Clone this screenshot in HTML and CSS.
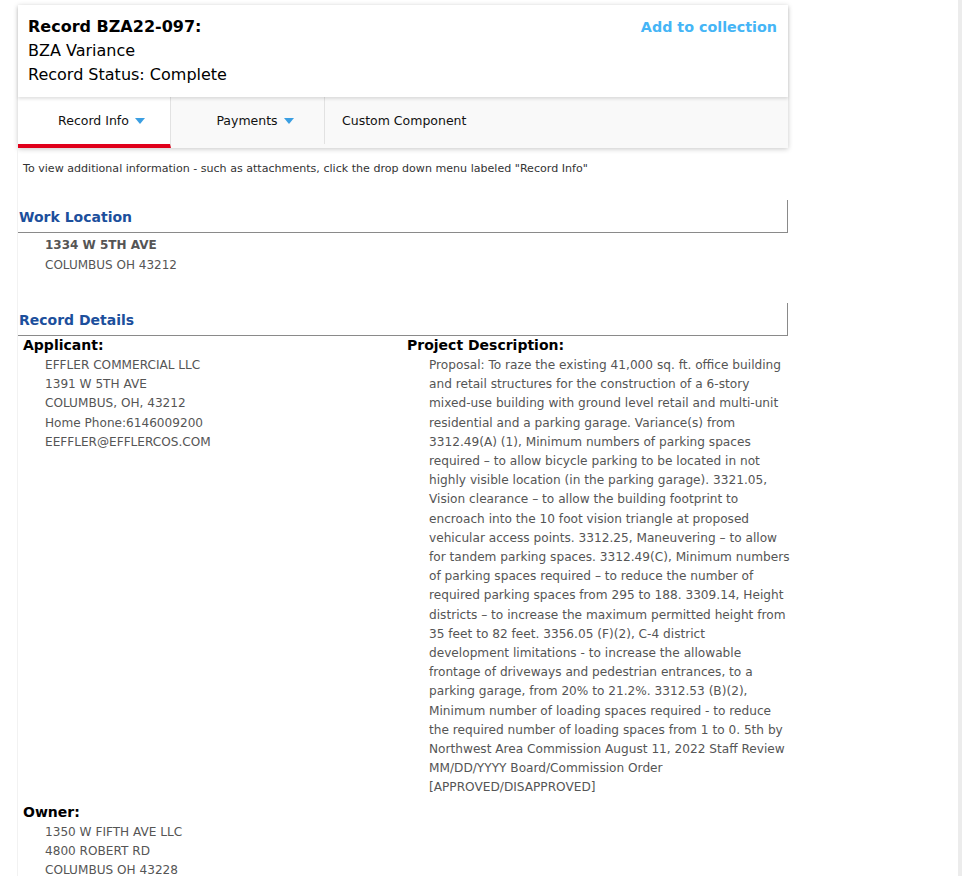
FILE: index.html
```html
<!DOCTYPE html>
<html lang="en">
<head>
<meta charset="utf-8">
<title>Record BZA22-097</title>
<link rel="stylesheet" href="styles.css">
</head>
<body>
<div class="page">
  <div class="record-card">
    <div class="record-head">
      <div class="record-title">
        <div class="record-id">Record BZA22-097:</div>
        <div class="record-type">BZA Variance</div>
        <div class="record-status">Record Status: Complete</div>
      </div>
      <a class="add-link" href="#">Add to collection</a>
    </div>
    <div class="tabs">
      <div class="tab tab-active">Record Info <span class="caret"></span></div>
      <div class="tab">Payments <span class="caret"></span></div>
      <div class="tab tab-plain">Custom Component</div>
    </div>
  </div>

  <div class="content">
    <p class="hint">To view additional information - such as attachments, click the drop down menu labeled "Record Info"</p>

    <section class="section">
      <h2 class="section-head">Work Location</h2>
      <div class="address">
        <div class="addr-strong">1334 W 5TH AVE</div>
        <div>COLUMBUS OH 43212</div>
      </div>
    </section>

    <section class="section section-details">
      <h2 class="section-head">Record Details</h2>
      <div class="details-grid">
        <div class="detail">
          <div class="detail-label">Applicant:</div>
          <div class="detail-value">
            <div>EFFLER COMMERCIAL LLC</div>
            <div>1391 W 5TH AVE</div>
            <div>COLUMBUS, OH, 43212</div>
            <div>Home Phone:6146009200</div>
            <div>EEFFLER@EFFLERCOS.COM</div>
          </div>
        </div>
        <div class="detail">
          <div class="detail-label">Project Description:</div>
          <div class="detail-value desc">Proposal: To raze the existing 41,000 sq. ft. office building<br>and retail structures for the construction of a 6-story<br>mixed-use building with ground level retail and multi-unit<br>residential and a parking garage. Variance(s) from<br>3312.49(A) (1), Minimum numbers of parking spaces<br>required – to allow bicycle parking to be located in not<br>highly visible location (in the parking garage). 3321.05,<br>Vision clearance – to allow the building footprint to<br>encroach into the 10 foot vision triangle at proposed<br>vehicular access points. 3312.25, Maneuvering – to allow<br>for tandem parking spaces. 3312.49(C), Minimum numbers<br>of parking spaces required – to reduce the number of<br>required parking spaces from 295 to 188. 3309.14, Height<br>districts – to increase the maximum permitted height from<br>35 feet to 82 feet. 3356.05 (F)(2), C-4 district<br>development limitations - to increase the allowable<br>frontage of driveways and pedestrian entrances, to a<br>parking garage, from 20% to 21.2%. 3312.53 (B)(2),<br>Minimum number of loading spaces required - to reduce<br>the required number of loading spaces from 1 to 0. 5th by<br>Northwest Area Commission August 11, 2022 Staff Review<br>MM/DD/YYYY Board/Commission Order<br>[APPROVED/DISAPPROVED]</div>
        </div>
        <div class="detail detail-owner">
          <div class="detail-label">Owner:</div>
          <div class="detail-value">
            <div>1350 W FIFTH AVE LLC</div>
            <div>4800 ROBERT RD</div>
            <div>COLUMBUS OH 43228</div>
          </div>
        </div>
      </div>
    </section>
  </div>
</div>
<div class="scroll-strip"></div>
</body>
</html>
```

FILE: styles.css
```css
html, body {
  margin: 0;
  padding: 0;
  background: #ffffff;
}

body {
  font-family: Verdana, "DejaVu Sans", sans-serif;
  color: #000;
}

.page {
  width: 770px;
  margin-left: 18px;
  padding-top: 5px;
}

.record-card {
  box-shadow: 0 1px 5px rgba(0, 0, 0, 0.22);
  background: #fff;
}

.record-head {
  display: flex;
  justify-content: space-between;
  align-items: flex-start;
  padding: 10px 11px 10px 10px;
  height: 72px;
  position: relative;
  z-index: 1;
  box-shadow: 0 2px 3px rgba(0, 0, 0, 0.12);
}

.record-title {
  font-size: 16px;
  line-height: 24px;
}

.record-id {
  font-weight: bold;
}

.add-link {
  color: #45b5f6;
  font-weight: bold;
  font-size: 14.3px;
  line-height: 24px;
  text-decoration: none;
}

.tabs {
  display: flex;
  background: #f9f9f9;
  height: 51px;
}

.tab {
  width: 153px;
  box-sizing: border-box;
  display: flex;
  align-items: center;
  justify-content: center;
  gap: 6px;
  padding-left: 15px;
  font-size: 12.5px;
  color: #111;
  border-right: 1px solid #e2e2e2;
  height: 47px;
  margin-bottom: 4px;
}

.tab-active {
  background: #fff;
  height: 51px;
  margin-bottom: 0;
  border-bottom: 4px solid #e0001b;
  width: 153px;
}

.tab + .tab {
  width: 154px;
}

.tab-plain {
  border-right: none;
  justify-content: flex-start;
  padding-left: 17px;
}

.caret {
  display: inline-block;
  width: 0;
  height: 0;
  border-left: 5px solid transparent;
  border-right: 5px solid transparent;
  border-top: 6px solid #3b9fe2;
  margin-top: 1px;
}

.content {
  border-left: 1px solid #f2f2f2;
  margin-left: -1px;
  padding-bottom: 20px;
}

.hint {
  margin: 0;
  padding: 14px 0 0 5px;
  font-size: 11.08px;
  line-height: 14px;
  color: #333;
}

.section {
  margin-top: 24px;
}

.section-details {
  margin-top: 28px;
}

.section-head {
  margin: 0;
  box-sizing: content-box;
  border-right: 1px solid #8a8a8a;
  border-bottom: 1px solid #8a8a8a;
  font-size: 14px;
  font-weight: bold;
  color: #1c4f9c;
  line-height: 16px;
  padding: 9px 0 0 1px;
  height: 23px;
}

.address {
  padding: 2px 0 0 27px;
  font-size: 12px;
  line-height: 20px;
  color: #555;
}

.addr-strong {
  font-weight: bold;
}

.details-grid {
  display: grid;
  grid-template-columns: 385px 385px;
}

.detail-label {
  font-size: 14px;
  font-weight: bold;
  line-height: 19px;
  padding-left: 5px;
  color: #000;
}

.detail-value {
  padding-left: 27px;
  padding-top: 1px;
  font-size: 12.1px;
  line-height: 19.2px;
  color: #555;
}

.detail:nth-child(2) .detail-label {
  padding-left: 4px;
}

.detail:nth-child(2) .detail-value {
  padding-left: 26px;
}

.desc {
  font-size: 12.15px;
  white-space: nowrap;
}

.detail-owner {
  margin-top: 5px;
}

.scroll-strip {
  position: fixed;
  top: 0;
  right: 0;
  width: 4px;
  height: 100%;
  background: #ececec;
}
```
